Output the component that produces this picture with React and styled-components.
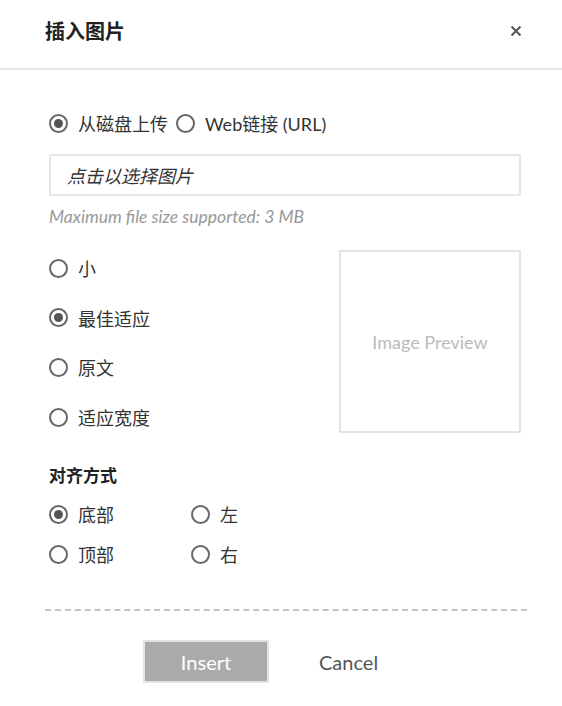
import React, { useState } from 'react';
import styled, { createGlobalStyle } from 'styled-components';

const GlobalStyle = createGlobalStyle`
    html, body {
        margin: 0;
        padding: 0;
        background: #fff;
    }
    body {
        font-family: Lato, "Noto Sans CJK SC", sans-serif;
        color: #333;
    }
`;

// Styled components
const Dialog = styled.div`
    width: 562px;
    height: 706px;
    background: #fff;
`;

const Header = styled.div`
    height: 70px;
    border-bottom: 2px solid #e6e6e6;
    display: flex;
    align-items: center;
    justify-content: space-between;
    padding: 0 38px 0 45px;
    box-sizing: border-box;
`;

const Title = styled.h2`
    margin: 0;
    font-size: 20px;
    font-weight: bold;
    color: #222;
    line-height: 24px;
    margin-top: -6px;
`;

const CloseButton = styled.button`
    border: none;
    background: none;
    padding: 0;
    width: 16px;
    height: 16px;
    display: flex;
    align-items: center;
    justify-content: center;
    margin-top: -7px;
    cursor: pointer;
`;

const Body = styled.div`
    padding: 0 41px 0 49px;
`;

const SourceRow = styled.div`
    display: flex;
    align-items: center;
    gap: 8px;
    margin-top: 41px;
    height: 24px;
`;

const Option = styled.label`
    display: flex;
    align-items: center;
    gap: 10px;
    font-size: 18px;
    color: #333;
    height: ${(p) => p.$height || 24}px;
    cursor: pointer;
`;

const Circle = styled.span`
    width: 19px;
    height: 19px;
    box-sizing: border-box;
    border: 2px solid #666;
    border-radius: 50%;
    display: flex;
    align-items: center;
    justify-content: center;
    flex-shrink: 0;

    &::after {
        content: '';
        width: 9px;
        height: 9px;
        border-radius: 50%;
        background: ${(p) => (p.$checked ? '#555' : 'transparent')};
    }
`;

const FileInput = styled.div`
    margin-top: 19px;
    height: 42px;
    box-sizing: border-box;
    border: 2px solid #e6e6e6;
    display: flex;
    align-items: center;
    padding-left: 16px;
    font-size: 18px;
    font-style: italic;
    color: #333;
    cursor: pointer;
`;

const Hint = styled.p`
    margin: 11px 0 0;
    font-size: 17.5px;
    line-height: 20px;
    font-style: italic;
    color: #999;
`;

const SizeSection = styled.div`
    margin-top: 23px;
    display: flex;
    justify-content: space-between;
`;

const SizeList = styled.div`
    display: flex;
    flex-direction: column;
    gap: 13.7px;
`;

const Preview = styled.div`
    width: 182px;
    height: 183px;
    box-sizing: border-box;
    border: 2px solid #e3e3e3;
    display: flex;
    align-items: center;
    justify-content: center;
    font-size: 18px;
    color: #bbb;
`;

const SubTitle = styled.h3`
    margin: 29px 0 0;
    font-size: 17px;
    font-weight: bold;
    line-height: 24px;
    color: #222;
`;

const AlignGrid = styled.div`
    margin-top: 14px;
    display: grid;
    grid-template-columns: 142px 142px;
    row-gap: 16px;
`;

const Footer = styled.div`
    margin: 43px 35px 0 45px;
    border-top: 2px dashed #c4c4c4;
    padding-top: 29px;
    display: flex;
    align-items: center;
    padding-left: 98px;
    gap: 50px;
`;

const InsertButton = styled.button`
    width: 126px;
    height: 43px;
    box-sizing: border-box;
    border: 2px solid #e3e3e3;
    background: #aaa;
    color: #fff;
    font-family: Lato, sans-serif;
    font-size: 20px;
    cursor: not-allowed;
`;

const CancelButton = styled.button`
    border: none;
    background: none;
    padding: 0;
    font-family: Lato, sans-serif;
    font-size: 20px;
    color: #555;
    cursor: pointer;
`;

function Radio({ checked, label, onSelect, height }) {
    return (
        <Option $height={height} onClick={onSelect}>
            <Circle $checked={checked} />
            {label}
        </Option>
    );
}

const sizes = ['小', '最佳适应', '原文', '适应宽度'];
const aligns = ['底部', '左', '顶部', '右'];

function App() {
    const [source, setSource] = useState('disk');
    const [size, setSize] = useState('最佳适应');
    const [align, setAlign] = useState('底部');

    return (
        <Dialog>
            <GlobalStyle />
            <Header>
                <Title>插入图片</Title>
                <CloseButton aria-label="close">
                    <svg width="12" height="12" viewBox="0 0 12 12">
                        <path d="M1.5 1.5 L10.5 10.5 M10.5 1.5 L1.5 10.5" stroke="#555" strokeWidth="2" />
                    </svg>
                </CloseButton>
            </Header>
            <Body>
                <SourceRow>
                    <Radio checked={source === 'disk'} label="从磁盘上传" onSelect={() => setSource('disk')} />
                    <Radio checked={source === 'url'} label="Web链接 (URL)" onSelect={() => setSource('url')} />
                </SourceRow>
                <FileInput>点击以选择图片</FileInput>
                <Hint>Maximum file size supported: 3 MB</Hint>
                <SizeSection>
                    <SizeList>
                        {sizes.map((s) => (
                            <Radio key={s} height={36} checked={size === s} label={s} onSelect={() => setSize(s)} />
                        ))}
                    </SizeList>
                    <Preview>Image Preview</Preview>
                </SizeSection>
                <SubTitle>对齐方式</SubTitle>
                <AlignGrid>
                    {aligns.map((a) => (
                        <Radio key={a} checked={align === a} label={a} onSelect={() => setAlign(a)} />
                    ))}
                </AlignGrid>
            </Body>
            <Footer>
                <InsertButton>Insert</InsertButton>
                <CancelButton>Cancel</CancelButton>
            </Footer>
        </Dialog>
    );
}

export default App;
